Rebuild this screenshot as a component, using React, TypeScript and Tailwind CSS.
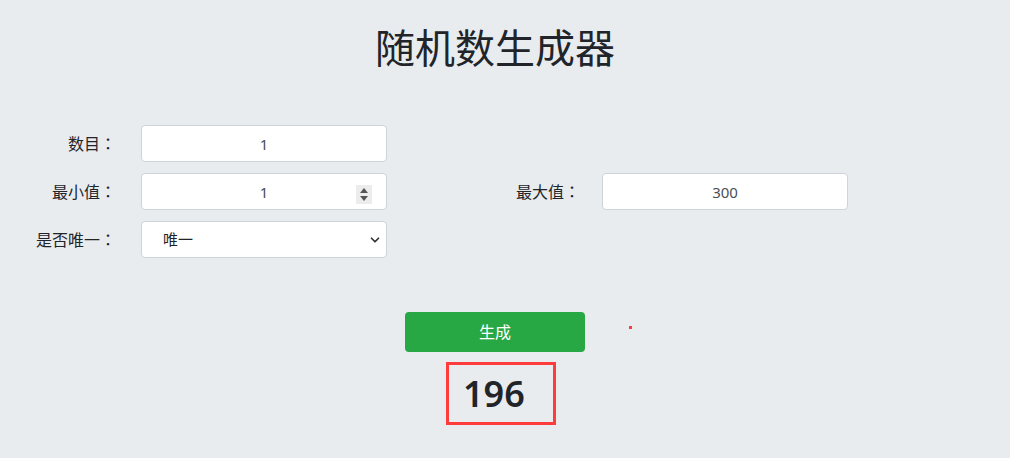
import { ChevronDown } from "lucide-react";

const font = "font-['Noto_Sans','Noto_Sans_CJK_SC',sans-serif]";
const inputCls =
  "h-[37px] w-[246px] rounded-[4px] border border-[#ced4da] bg-white text-center text-[15px] text-[#495057] outline-none";

function Label({ text, width }: { text: string; width: string }) {
  return (
    <label className={`${width} shrink-0 text-right text-[16px] text-[#212529]`}>
      {text}
      <span className="font-['Noto_Sans_CJK_JP',sans-serif]">：</span>
    </label>
  );
}

export default function App() {
  return (
    <div className={`min-h-screen w-full bg-[#e9ecef] ${font}`}>
      <div className="flex w-[990px] flex-col items-center">
        <h1 className="pt-[20px] text-center text-[40px] leading-[56px] text-[#212529]">
          随机数生成器
        </h1>

        <div className="mt-[49px] flex w-full flex-col gap-[11px]">
          <div className="flex items-center">
            <Label text="数目" width="w-[116px]" />
            <input className={`${inputCls} ml-[25px]`} defaultValue="1" />
          </div>
          <div className="flex items-center">
            <Label text="最小值" width="w-[116px]" />
            <div className="relative ml-[25px]">
              <input className={inputCls} defaultValue="1" />
              <div className="absolute right-[15px] top-[12px] flex h-[19px] w-[16px] flex-col items-center justify-center gap-[3px] bg-[#ececec]">
                <span className="h-0 w-0 border-x-[4px] border-b-[5px] border-x-transparent border-b-[#555]" />
                <span className="h-0 w-0 border-x-[4px] border-t-[5px] border-x-transparent border-t-[#555]" />
              </div>
            </div>
            <Label text="最大值" width="w-[193px]" />
            <input className={`${inputCls} ml-[22px]`} defaultValue="300" />
          </div>
          <div className="flex items-center">
            <Label text="是否唯一" width="w-[116px]" />
            <div className="relative ml-[25px] flex h-[37px] w-[246px] items-center rounded-[4px] border border-[#ced4da] bg-white pl-[21px] text-[15px] text-[#212529]">
              唯一
              <ChevronDown className="absolute right-[4px] top-[11px] h-[14px] w-[14px] text-[#333]" strokeWidth={3} />
            </div>
          </div>
        </div>

        <div className="relative mt-[54px]">
          <button className="h-[40px] w-[180px] rounded-[4px] bg-[#28a745] text-[16px] text-white">
            生成
          </button>
          <span className="absolute left-[224px] top-[14px] h-[3px] w-[3px] bg-[#ff3b3b]" />
        </div>

        <div className="mt-[10px] ml-[12px] flex h-[63px] w-[110px] items-center border-[3px] border-[#ff3b3b] pl-[14px]">
          <span className="text-[36px] font-semibold leading-none text-[#212529]">196</span>
        </div>
      </div>
    </div>
  );
}
